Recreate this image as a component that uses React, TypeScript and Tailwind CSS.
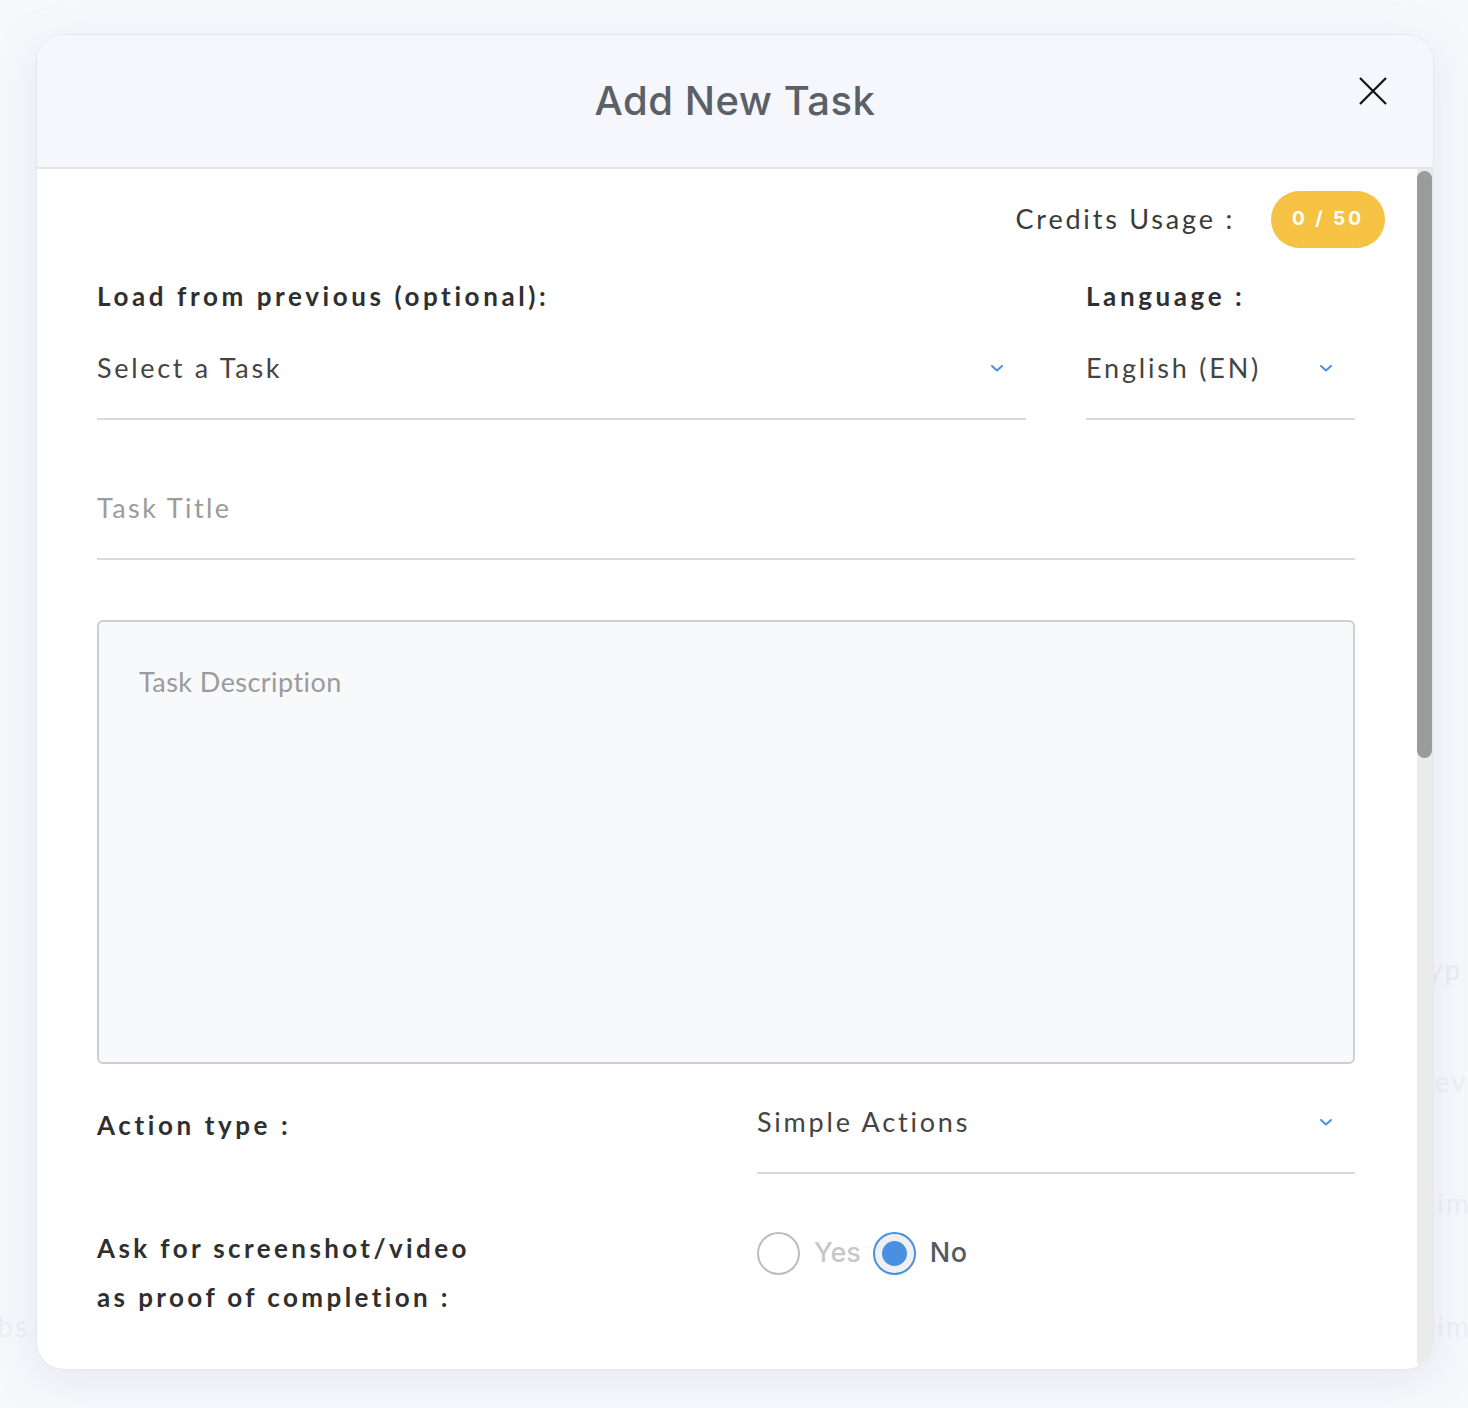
import React from "react";

const Chevron = () => (
  <svg width="14" height="9" viewBox="0 0 14 9" fill="none" className="shrink-0">
    <path d="M2 2l5 4.5L12 2" stroke="#4a90e2" strokeWidth="2" strokeLinecap="round" strokeLinejoin="round" />
  </svg>
);

export default function App() {
  const body = { fontFamily: "Lato, 'Open Sans', sans-serif" } as React.CSSProperties;
  const head = { fontFamily: "Inter, 'Open Sans', sans-serif" } as React.CSSProperties;
  return (
    <div className="relative min-h-[1408px] w-full overflow-hidden bg-[#f7f8fc] pt-[34px] pl-[36px]" style={body}>
      {/* faint background page text behind overlay */}
      <span className="absolute left-[1412px] top-[948px] text-[28px] tracking-[2px] text-[#e9ebf2]">Typ</span>
      <span className="absolute left-[1416px] top-[1060px] text-[28px] tracking-[2px] text-[#eceef4]">Rev</span>
      <span className="absolute left-[1420px] top-[1182px] text-[28px] tracking-[2px] text-[#eceef4]">Sim</span>
      <span className="absolute left-[1420px] top-[1305px] text-[28px] tracking-[2px] text-[#eceef4]">Sim</span>
      <span className="absolute left-[-34px] top-[1305px] text-[28px] tracking-[2px] text-[#eceef4]">Jobs</span>

      <div className="relative flex h-[1336px] w-[1398px] flex-col overflow-hidden rounded-[28px] border border-[#e5e7ee] bg-white shadow-[0_10px_40px_rgba(180,188,210,0.25)]">
        {/* header */}
        <div className="relative flex h-[134px] shrink-0 items-center justify-center border-b-2 border-[#e3e5ea] bg-[#f5f7fc]">
          <h1 className="text-[40px] font-medium tracking-[0.5px] text-[#5b5f66]" style={head}>Add New Task</h1>
          <button className="absolute right-[46px] top-[42px] flex h-[28px] w-[28px] items-center justify-center">
            <svg width="28" height="28" viewBox="0 0 28 28" fill="none">
              <path d="M1 1l26 26M27 1L1 27" stroke="#111" strokeWidth="2.2" />
            </svg>
          </button>
        </div>

        {/* body */}
        <div className="flex min-h-0 flex-1">
          <div className="flex-1 pl-[60px] pr-[62px]">
            {/* credits */}
            <div className="mr-[-30px] mt-[22px] flex items-center justify-end gap-[36px]">
              <span className="text-[27px] tracking-[2.8px] text-[#3a3a3a]">Credits Usage :</span>
              <span className="flex h-[57px] w-[114px] shrink-0 items-center justify-center rounded-full bg-[#f5c244] text-[19px] font-bold tracking-[3px] text-white" style={head}>0 / 50</span>
            </div>

            {/* load from previous / language */}
            <div className="mt-[30px] flex gap-[60px]">
              <div className="flex-1">
                <div className="h-[36px] text-[26px] font-bold leading-[36px] tracking-[3.6px] text-[#2f2f2f]">Load from previous (optional):</div>
                <div className="flex items-center justify-between border-b-2 border-[#d9d9de] pb-[32px] pl-0 pr-[22px] pt-[36px]">
                  <span className="text-[27px] leading-[36px] tracking-[2.7px] text-[#444]">Select a Task</span>
                  <Chevron />
                </div>
              </div>
              <div className="w-[269px]">
                <div className="h-[36px] text-[26px] font-bold leading-[36px] tracking-[3.6px] text-[#2f2f2f]">Language :</div>
                <div className="flex items-center justify-between border-b-2 border-[#d9d9de] pb-[32px] pr-[22px] pt-[36px]">
                  <span className="text-[27px] leading-[36px] tracking-[2.8px] text-[#444]">English (EN)</span>
                  <Chevron />
                </div>
              </div>
            </div>

            {/* task title */}
            <div className="mt-[30px] border-b-2 border-[#d9d9de] pb-[32px] pt-[40px]">
              <span className="text-[27px] leading-[36px] tracking-[2.4px] text-[#9b9b9b]">Task Title</span>
            </div>

            {/* description */}
            <div className="mt-[60px] h-[444px] rounded-[6px] border-2 border-[#cfcfd3] bg-[#f8f9fb] pl-[40px] pt-[42px]">
              <span className="text-[27px] leading-[36px] tracking-[0.45px] text-[#9b9b9b]">Task Description</span>
            </div>

            {/* action type */}
            <div className="flex">
              <div className="w-[660px] pt-[43px] text-[26px] font-bold leading-[36px] tracking-[3.6px] text-[#2f2f2f]">Action type :</div>
              <div className="flex flex-1 items-center justify-between border-b-2 border-[#d9d9de] pb-[32px] pr-[22px] pt-[40px]">
                <span className="text-[27px] leading-[36px] tracking-[2.8px] text-[#444]">Simple Actions</span>
                <Chevron />
              </div>
            </div>

            {/* proof */}
            <div className="mt-[50px] flex">
              <div className="w-[660px] text-[26px] font-bold leading-[49px] tracking-[3.4px] text-[#2f2f2f]">
                Ask for screenshot/video<br />as proof of completion :
              </div>
              <div className="mt-[2px] flex h-[54px] items-center" style={head}>
                <span className="h-[43px] w-[43px] rounded-full border-2 border-[#bdbdbd] bg-white" />
                <span className="ml-[14px] text-[27px] font-medium text-[#c8c8c8]">Yes</span>
                <span className="ml-[12px] flex h-[43px] w-[43px] items-center justify-center rounded-full border-2 border-[#4a90e2] bg-[#f0f0f0]">
                  <span className="h-[25px] w-[25px] rounded-full bg-[#4a90e2]" />
                </span>
                <span className="ml-[14px] text-[27px] font-medium tracking-[0.5px] text-[#555a60]">No</span>
              </div>
            </div>
          </div>

          {/* scrollbar */}
          <div className="w-[16px] shrink-0 rounded-b-[12px] bg-[#ebebeb] pt-[2px]">
            <div className="h-[587px] w-[15px] rounded-full bg-[#9b9b9b]" />
          </div>
        </div>
      </div>
    </div>
  );
}
